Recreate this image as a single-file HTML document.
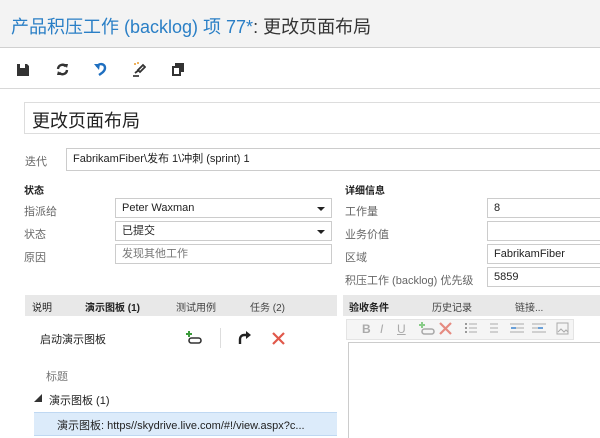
<!DOCTYPE html>
<html><head><meta charset="utf-8"><style>
*{box-sizing:border-box;margin:0;padding:0}
body{width:600px;height:438px;overflow:hidden;background:#fff;font-family:"Liberation Sans","Noto Sans CJK SC",sans-serif;font-size:11px;color:#222;position:relative}
.a{position:absolute;white-space:nowrap}
.lbl{color:#666;font-size:11px}
.box{position:absolute;border:1px solid #ccc;background:#fff;font-size:11px;padding-left:6px;line-height:18px;height:20px}
.dd::after{content:"";position:absolute;right:6px;top:8px;border-left:4px solid transparent;border-right:4px solid transparent;border-top:4px solid #222}
</style></head><body>
<div class="a" style="left:0;top:0;width:600px;height:48px;background:#f3f3f3;border-bottom:1px solid #d0d0d0"></div>
<div class="a" style="left:11px;top:13px;font-size:18px;color:#2a7fc6">产品积压工作 (backlog) 项 77*<span style="color:#333">: 更改页面布局</span></div>
<div class="a" style="left:0;top:88px;width:600px;height:1px;background:#d8d8d8"></div>
<svg class="a" style="left:17px;top:64px" width="12" height="12"><path d="M0 0h10l2 2v10H0z" fill="#333"/><rect x="3" y="0" width="5" height="4" fill="#fff"/></svg>
<svg class="a" style="left:56px;top:63px" width="13" height="13"><path d="M2 6a4.5 4.5 0 0 1 8-2.5M11 7a4.5 4.5 0 0 1-8 2.5" stroke="#333" stroke-width="2.4" fill="none"/><path d="M8 1l4 0-1 4zM5 12l-4 0 1-4z" fill="#333"/></svg>
<svg class="a" style="left:94px;top:62px" width="13" height="15"><path d="M3 5C4 1 11 1 11 6c0 3-3 5-6 7" stroke="#1f6fc0" stroke-width="2.4" fill="none"/><path d="M0 2l5 6 1-6z" fill="#1f6fc0"/></svg>
<svg class="a" style="left:132px;top:62px" width="14" height="15"><path d="M6 8l5-5 2 2-5 5zM3 11l4-3" stroke="#333" stroke-width="1.8" fill="none"/><circle cx="3" cy="2" r="1" fill="#e89a2c"/><circle cx="6" cy="1" r="1" fill="#e89a2c"/><path d="M1 13h6v2H1z" fill="#555"/></svg>
<svg class="a" style="left:172px;top:63px" width="12" height="13"><path d="M3 0h9v9H9V3H3z" fill="#333"/><rect x="1" y="4" width="7" height="8" stroke="#333" stroke-width="2" fill="none"/></svg>
<div class="a" style="left:24px;top:102px;width:580px;height:32px;border:1px solid #ddd;background:#fff"></div>
<div class="a" style="left:32px;top:107px;font-size:18px;color:#222">更改页面布局</div>
<div class="a lbl" style="left:25px;top:153px">迭代</div>
<div class="box" style="left:66px;top:148px;width:540px;height:23px;line-height:21px">FabrikamFiber\发布 1\冲刺 (sprint) 1</div>
<div class="a" style="left:24px;top:182px;font-weight:bold;font-size:10px">状态</div>
<div class="a lbl" style="left:24px;top:203px">指派给</div>
<div class="box dd" style="left:115px;top:198px;width:217px">Peter Waxman</div>
<div class="a lbl" style="left:24px;top:226px">状态</div>
<div class="box dd" style="left:115px;top:221px;width:217px">已提交</div>
<div class="a lbl" style="left:24px;top:249px">原因</div>
<div class="box" style="left:115px;top:244px;width:217px;color:#777">发现其他工作</div>
<div class="a" style="left:345px;top:182px;font-weight:bold;font-size:10px">详细信息</div>
<div class="a lbl" style="left:345px;top:203px">工作量</div>
<div class="box" style="left:487px;top:198px;width:120px">8</div>
<div class="a lbl" style="left:345px;top:226px">业务价值</div>
<div class="box" style="left:487px;top:221px;width:120px"></div>
<div class="a lbl" style="left:345px;top:249px">区域</div>
<div class="box" style="left:487px;top:244px;width:120px">FabrikamFiber</div>
<div class="a lbl" style="left:345px;top:272px">积压工作 (backlog) 优先级</div>
<div class="box" style="left:487px;top:267px;width:120px">5859</div>
<div class="a" style="left:25px;top:295px;width:312px;height:21px;background:#e8e8e8"></div>
<div class="a" style="left:32px;top:299px;font-size:10px">说明</div>
<div class="a" style="left:85px;top:299px;font-size:10px;font-weight:bold">演示图板 (1)</div>
<div class="a" style="left:176px;top:299px;font-size:10px;color:#444">测试用例</div>
<div class="a" style="left:250px;top:299px;font-size:10px;color:#444">任务 (2)</div>
<div class="a" style="left:40px;top:331px;font-size:11px">启动演示图板</div>
<svg class="a" style="left:186px;top:331px" width="16" height="14"><path d="M3 0v6M0 3h6" stroke="#3a9a3a" stroke-width="2"/><rect x="3" y="7" width="12" height="5" rx="2.5" stroke="#333" stroke-width="1.6" fill="none"/></svg>
<div class="a" style="left:220px;top:328px;width:1px;height:20px;background:#ddd"></div>
<svg class="a" style="left:237px;top:331px" width="14" height="14"><path d="M3 13V8a4 4 0 0 1 4-4h4" stroke="#222" stroke-width="2.4" fill="none"/><path d="M9 0l5 4-5 4z" fill="#222"/></svg>
<svg class="a" style="left:272px;top:332px" width="13" height="13"><path d="M1 1l11 11M12 1L1 12" stroke="#e0584a" stroke-width="2.2"/></svg>
<div class="a" style="left:46px;top:368px;font-size:11px;color:#777">标题</div>
<div class="a" style="left:34px;top:393px;font-size:8px;color:#333">◢</div>
<div class="a" style="left:49px;top:392px;font-size:11px">演示图板 (1)</div>
<div class="a" style="left:34px;top:412px;width:303px;height:24px;background:#dcebfa;border-top:1px solid #bfd8f2;border-bottom:1px solid #bfd8f2"></div>
<div class="a" style="left:57px;top:417px;font-size:11px">演示图板: https//skydrive.live.com/#!/view.aspx?c...</div>
<div class="a" style="left:343px;top:295px;width:257px;height:21px;background:#e8e8e8"></div>
<div class="a" style="left:349px;top:299px;font-size:10px;font-weight:bold">验收条件</div>
<div class="a" style="left:432px;top:299px;font-size:10px;color:#444">历史记录</div>
<div class="a" style="left:515px;top:299px;font-size:10px;color:#444">链接...</div>
<div class="a" style="left:346px;top:319px;width:228px;height:21px;background:#f5f5f5;border:1px solid #e4e4e4"></div>
<div class="a" style="left:362px;top:322px;font-weight:bold;color:#aaa;font-size:12px">B</div>
<div class="a" style="left:380px;top:322px;font-style:italic;color:#aaa;font-size:12px">I</div>
<div class="a" style="left:397px;top:322px;text-decoration:underline;color:#aaa;font-size:12px">U</div>
<svg class="a" style="left:419px;top:322px" width="16" height="14"><path d="M3 0v6M0 3h6" stroke="#8c8" stroke-width="2"/><rect x="3" y="7" width="12" height="5" rx="2.5" stroke="#aaa" stroke-width="1.6" fill="none"/></svg>
<svg class="a" style="left:439px;top:322px" width="13" height="13"><path d="M1 1l11 11M12 1L1 12" stroke="#e58a80" stroke-width="2.2"/></svg>
<svg class="a" style="left:464px;top:322px" width="40" height="13" stroke="#aaa" stroke-width="1"><path d="M5 2h8M5 6h8M5 10h8M26 2h8M26 6h8M26 10h8"/><path d="M1 2h2M1 6h2M1 10h2" stroke="#999" stroke-width="2"/></svg>
<svg class="a" style="left:508px;top:322px" width="44" height="13" stroke="#aaa"><path d="M2 2h14M8 6h8M2 10h14M24 2h14M24 6h8M24 10h14"/><path d="M3 6h5M35 6h-5" stroke="#6aa0d8" stroke-width="2"/></svg>
<svg class="a" style="left:556px;top:322px" width="13" height="13"><rect x="1" y="1" width="11" height="11" stroke="#aaa" fill="none"/><path d="M2 10l3-3 3 3 2-2 2 2" stroke="#aaa" fill="none"/></svg>
<div class="a" style="left:348px;top:342px;width:252px;height:96px;border:1px solid #ccc;border-right:none;border-bottom:none;background:#fff"></div>
</body></html>
